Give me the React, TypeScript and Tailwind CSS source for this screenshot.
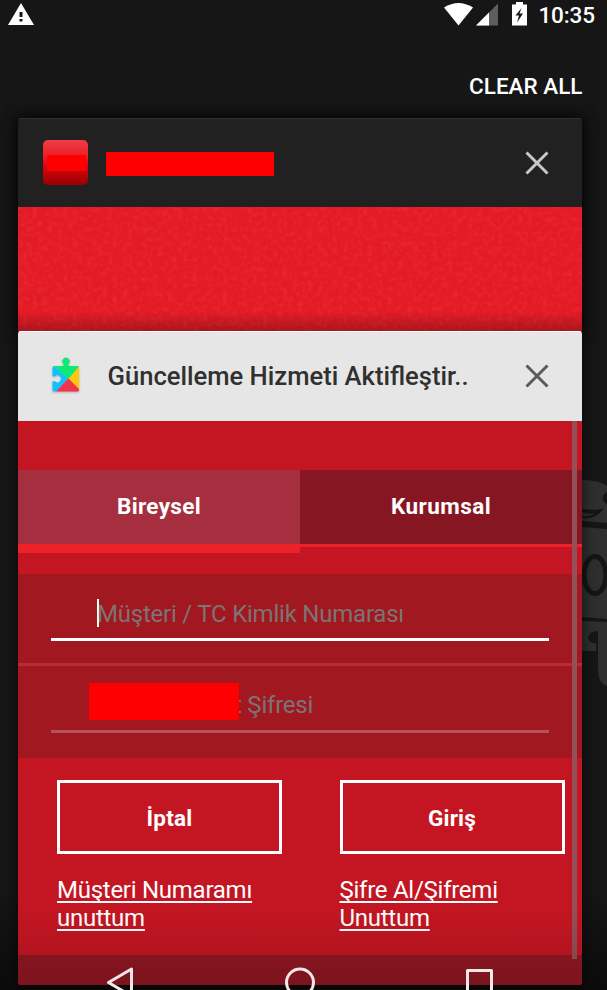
import React from "react";

function StatusBar() {
  return (
    <header className="flex h-[30px] items-start justify-between pl-[8px] pr-[12px]">
      <svg className="mt-[3px]" width="26" height="23" viewBox="0 0 26 23">
        <path d="M13 0 26 22H0Z" fill="#fff" />
        <path d="M11.500 9h3v5h-3zM11.500 16h3v2.500h-3z" fill="#161616" />
      </svg>
      <div className="flex items-start">
        <svg className="mr-[3px]" width="95" height="28" viewBox="0 0 95 28">
          <path d="M4 7.500Q18.500 -1.500 33 7.500L18.500 25.500Z" fill="#fff" />
          <path d="M36 25.500 58 3.500V25.500Z" fill="#5e5e5e" />
          <path d="M36 25.500 49 12.500V25.500Z" fill="#fff" />
          <path d="M76 2h7v2.500h4V25.500H72V4.500h4z" fill="#fff" />
          <path d="M81.500 8 75.500 15.500H79L77 22.500 83 13.500H79.500Z" fill="#161616" />
        </svg>
        <span className="mt-[1px] text-[22.500px] leading-[28px] font-medium tracking-[-0.1px]">10:35</span>
      </div>
    </header>
  );
}

function CloseIcon({ color }: { color: string }) {
  return (
    <svg width="24" height="24" viewBox="0 0 24 24" stroke={color} strokeWidth="3" fill="none">
      <path d="M1.500 1.500l21 21M22.500 1.500l-21 21" />
    </svg>
  );
}

function PuzzleIcon() {
  return (
    <svg width="32" height="38" viewBox="0 0 32 38" className="drop-shadow-[0_1px_1px_rgba(0,0,0,0.25)]">
      <path d="M.5 10.500Q.5 9 2 9L16.500 22 4 34.500H2Q.5 34.500 .5 33V24.200H3A3.500 3.500 0 1 0 3 19.200H.5Z" fill="#0cc3fb" />
      <path d="M2 9H11.500V6.800A3.600 3.600 0 1 1 16.500 6.800V9H26L27 9.500 16.500 22 2 9Z" fill="#0bea74" />
      <path d="M27 9.500 16.500 22 27 33Z" fill="#fdc70b" />
      <path d="M16.500 21.500 27 32V33Q27 34.500 25.500 34.500H4Z" fill="#f43249" />
    </svg>
  );
}

function Wallpaper() {
  return (
    <svg className="absolute left-[582px] top-[478px]" width="25" height="214" viewBox="0 0 25 214">
      <path d="M0 2Q18 2 25 8V45L0 43Z" fill="#2f2f2f" />
      <ellipse cx="27" cy="20" rx="6.500" ry="6" fill="#151515" />
      <path d="M0 31Q15 33 22 30Q14 42 0 40Z" fill="#151515" />
      <path d="M0 34Q8 37 13 35Q8 39 0 38Z" fill="#2f2f2f" />
      <path d="M0 49 25 51V141L0 139Z" fill="#2f2f2f" />
      <ellipse cx="13" cy="97" rx="11" ry="18.500" fill="none" stroke="#151515" strokeWidth="5" />
      <path d="M0 143 25 144V208Q16 205 16 192V153Q8 153 6 159Q7 166 14 165V173H0Z" fill="#2f2f2f" />
    </svg>
  );
}

function BackgroundCard() {
  return (
    <section className="h-[213px] rounded-t-[3px] bg-[#212121] shadow-[0_0_14px_rgba(0,0,0,0.65)]">
      <div className="flex h-[89px] items-center rounded-t-[3px] border-t border-[#303030] pr-[33px] pb-[1px] pl-[25px]">
        <div className="flex h-[45px] w-[45px] items-center rounded-[5px] bg-linear-to-b from-[#f23a48] via-[#e60814] to-[#980000] pl-[4px]">
          <div className="h-[16px] w-[39px] rounded-[1px] bg-[#ff0000]" />
        </div>
        <div className="ml-[18px] mt-[2px] h-[24px] w-[168px] rounded-[1px] bg-[#ff0000]" />
        <div className="ml-auto">
          <CloseIcon color="#c8c8c8" />
        </div>
      </div>
      <div className="relative h-[124px] bg-[#e41a27]">
        <svg className="absolute inset-0" width="564" height="124">
          <filter id="grain" x="0" y="0" width="1" height="1">
            <feTurbulence type="fractalNoise" baseFrequency="0.2" numOctaves="3" seed="4" />
            <feColorMatrix values="0 0 0 0 0.9  0 0 0 0 0.35  0 0 0 0 0.15  1.2 0 0 0 -0.5" />
          </filter>
          <rect width="564" height="124" filter="url(#grain)" opacity="0.22" />
        </svg>
        <div className="absolute inset-x-0 bottom-0 h-[20px] bg-linear-to-b from-transparent to-black/25" />
      </div>
    </section>
  );
}

function Tabs() {
  return (
    <div className="flex h-[83px] text-[22.500px] leading-[28px] font-bold">
      <div className="flex w-[282px] flex-col border-b-9 border-[#ed2229] bg-[#a52f3e] pt-[22px] text-center">
        <span className="tracking-[0.35px]">Bireysel</span>
      </div>
      <div className="h-[77px] w-[282px] border-b-3 border-[#ed2229] bg-[#861621] pt-[22px] text-center">
        <span className="tracking-[0.45px]">Kurumsal</span>
      </div>
    </div>
  );
}

function LoginForm() {
  return (
    <div className="mt-[21px] bg-[#a11821] text-[24px] leading-[30px] tracking-[-0.22px] text-[#7c7473]">
      <div className="h-[92px] border-b-3 border-[#b82c38] px-[33px] pt-[25px]">
        <div className="flex h-[42px] border-b-3 border-white pl-[46px]">
          <div className="h-[28px] w-[2px] bg-white" />
          <span className="-ml-[2px] whitespace-nowrap">Müşteri / TC Kimlik Numarası</span>
        </div>
      </div>
      <div className="h-[92px] px-[33px] pt-[17px]">
        <div className="flex h-[50px] border-b-3 border-[#b7515a] pl-[38px]">
          <div className="z-10 h-[37px] w-[150px] rounded-[1px] bg-[#ff0000]" />
          <span className="-ml-[5px] mt-[7px] whitespace-nowrap">t Şifresi</span>
        </div>
      </div>
    </div>
  );
}

function Actions() {
  return (
    <div className="grid grid-cols-[225px_225px] gap-x-[57.500px] pt-[22px] pl-[39px]">
      <button className="h-[74px] border-3 border-white pt-[3px] text-[22.500px] font-bold tracking-[0.2px]">İptal</button>
      <button className="h-[74px] border-3 border-white pt-[3px] text-[22.500px] font-bold tracking-[0.2px]">Giriş</button>
      <a className="mt-[22px] text-[24px] leading-[28px] tracking-[-0.26px] underline decoration-2 underline-offset-[3px] [text-decoration-skip-ink:none]">
        Müşteri Numaramı<br />unuttum
      </a>
      <a className="mt-[22px] text-[24px] leading-[28px] tracking-[-0.26px] underline decoration-2 underline-offset-[3px] [text-decoration-skip-ink:none]">
        Şifre Al/Şifremi<br />Unuttum
      </a>
    </div>
  );
}

function ForegroundCard() {
  return (
    <section className="relative h-[654px] overflow-hidden rounded-[3px] bg-[#c41622]">
      <div className="flex h-[89.500px] items-center border-t border-white bg-[#e6e6e6] pr-[33px] pb-[1px] pl-[34px]">
        <PuzzleIcon />
        <h1 className="ml-[23.500px] text-[25.600px] leading-[32px] font-medium whitespace-nowrap text-[#303030]">
          Güncelleme Hizmeti Aktifleştir..
        </h1>
        <div className="ml-auto">
          <CloseIcon color="#5b5b5b" />
        </div>
      </div>
      <div className="pt-[49.500px]">
        <Tabs />
        <LoginForm />
        <Actions />
      </div>
      <div className="absolute inset-x-0 bottom-0 h-[30px] bg-[#921722]" />
      <div className="absolute top-[90px] right-[5px] h-[538px] w-[5px] bg-[#945059]" />
      <div className="absolute inset-x-0 bottom-0 h-[80px] bg-linear-to-b from-transparent to-black/15" />
    </section>
  );
}

function NavigationIcons() {
  return (
    <svg className="absolute bottom-0 left-0" width="607" height="28" viewBox="0 962 607 28" fill="none" stroke="#f3e7e8" strokeWidth="3" strokeLinejoin="round">
      <path d="M131.500 969V996L108.500 982.500Z" />
      <circle cx="300" cy="982.500" r="13.500" />
      <rect x="467.500" y="970.500" width="24" height="24" />
    </svg>
  );
}

export default function App() {
  return (
    <main className="relative h-[990px] w-[607px] overflow-hidden bg-[#161616] font-[Roboto,sans-serif] text-white">
      <Wallpaper />
      <div className="absolute inset-x-0 bottom-0 h-[100px] bg-linear-to-b from-transparent to-black/50" />
      <StatusBar />
      <div className="flex h-[88px] justify-end pt-[42px] pr-[24.500px] text-[22.500px] leading-[28px] font-medium">CLEAR ALL</div>
      <div className="relative mx-auto ml-[18px] w-[564px] shadow-[0_0_14px_rgba(0,0,0,0.65)]">
        <BackgroundCard />
        <ForegroundCard />
      </div>
      <NavigationIcons />
    </main>
  );
}
